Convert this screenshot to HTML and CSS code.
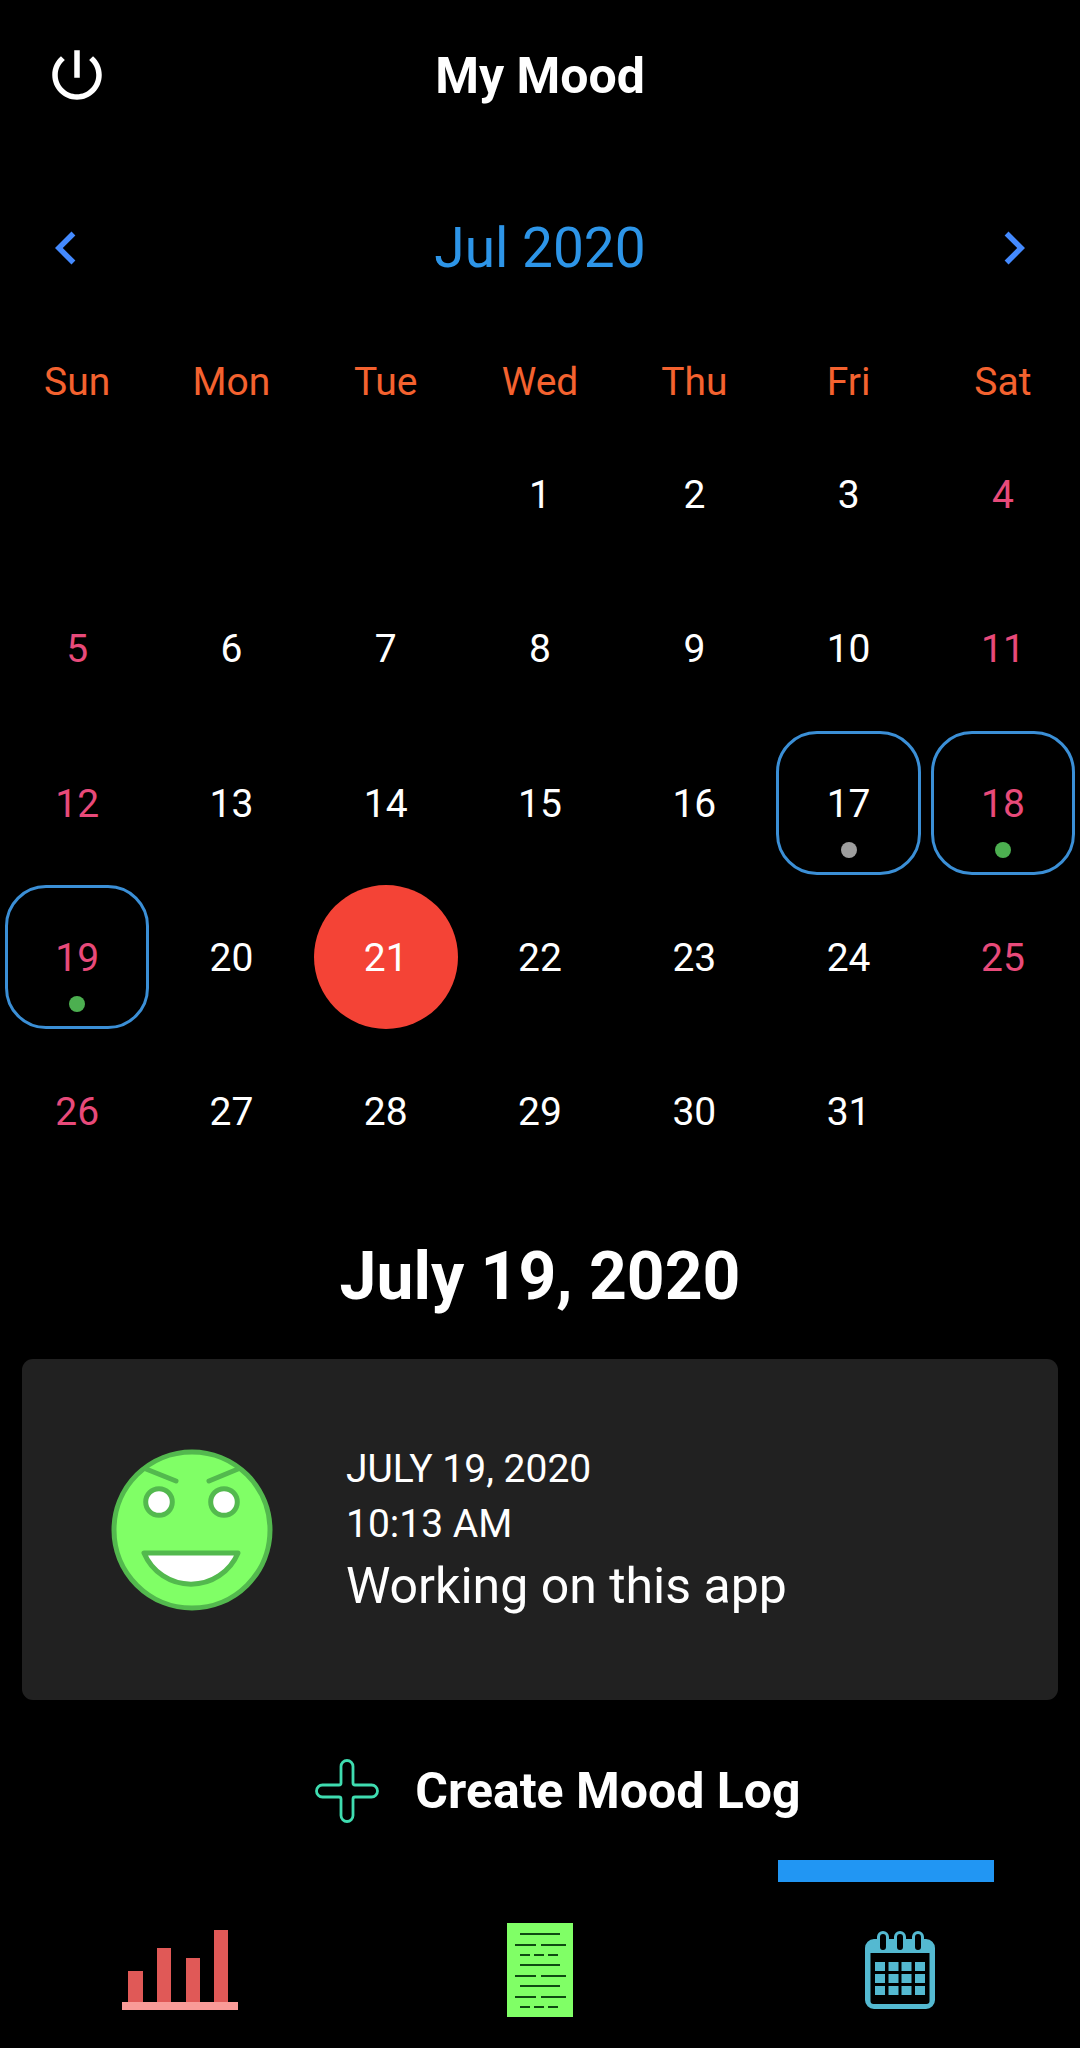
FILE: index.html
```html
<!DOCTYPE html>
<html lang="en">
<head>
    <meta charset="UTF-8">
    <meta name="viewport" content="width=device-width, initial-scale=1.0">
    <title>My Mood</title>
    <link rel="stylesheet" href="styles.css">
</head>
<body>
    <header class="topbar">
        <button class="icon-button" aria-label="Log out">
            <svg class="icon" viewBox="0 0 24 24" fill="currentColor"><path d="M13 3h-2v10h2V3zm4.83 2.17l-1.42 1.42C17.99 7.86 19 9.81 19 12c0 3.87-3.13 7-7 7s-7-3.13-7-7c0-2.19 1.01-4.14 2.58-5.42L6.17 5.17C4.23 6.82 3 9.26 3 12c0 4.97 4.03 9 9 9s9-4.03 9-9c0-2.74-1.23-5.18-3.17-6.83z"/></svg>
        </button>
        <h1 class="title">My Mood</h1>
    </header>

    <main>
        <div class="month">
            <button class="icon-button" aria-label="Previous month">
                <svg class="icon" viewBox="0 0 24 24" fill="currentColor"><path d="M15.41 7.41L14 6l-6 6 6 6 1.41-1.41L10.83 12z"/></svg>
            </button>
            <h2 class="month-name">Jul 2020</h2>
            <button class="icon-button" aria-label="Next month">
                <svg class="icon" viewBox="0 0 24 24" fill="currentColor"><path d="M10 6L8.59 7.41 13.17 12l-4.58 4.59L10 18l6-6z"/></svg>
            </button>
        </div>

        <div class="weekdays">
            <span>Sun</span>
            <span>Mon</span>
            <span>Tue</span>
            <span>Wed</span>
            <span>Thu</span>
            <span>Fri</span>
            <span>Sat</span>
        </div>

        <div class="days">
            <!-- July starts on a Wednesday -->
            <button class="day first">1</button>
            <button class="day">2</button>
            <button class="day">3</button>
            <button class="day weekend">4</button>

            <button class="day weekend">5</button>
            <button class="day">6</button>
            <button class="day">7</button>
            <button class="day">8</button>
            <button class="day">9</button>
            <button class="day">10</button>
            <button class="day weekend">11</button>

            <button class="day weekend">12</button>
            <button class="day">13</button>
            <button class="day">14</button>
            <button class="day">15</button>
            <button class="day">16</button>
            <button class="day logged">17<span class="dot"></span></button>
            <button class="day weekend logged">18<span class="dot good"></span></button>

            <button class="day weekend logged">19<span class="dot good"></span></button>
            <button class="day">20</button>
            <button class="day today">21</button>
            <button class="day">22</button>
            <button class="day">23</button>
            <button class="day">24</button>
            <button class="day weekend">25</button>

            <button class="day weekend">26</button>
            <button class="day">27</button>
            <button class="day">28</button>
            <button class="day">29</button>
            <button class="day">30</button>
            <button class="day">31</button>
        </div>

        <h2 class="selected-date">July 19, 2020</h2>

        <div class="card">
            <svg class="face" viewBox="0 0 162 162" fill="#fff" stroke="#53b94e" stroke-width="5" stroke-linecap="round" stroke-linejoin="round">
                <circle cx="81" cy="81" r="78" fill="#80ff66"/>
                <path d="M35 20l30 12M127 20L98 32"/>
                <circle cx="48" cy="53" r="13.3"/>
                <circle cx="113" cy="53" r="13.3"/>
                <path d="M33 104h94A51 51 0 0 1 33 104z"/>
            </svg>
            <div class="log">
                <p class="log-time">JULY 19, 2020</p>
                <p class="log-time">10:13 AM</p>
                <p class="log-text">Working on this app</p>
            </div>
        </div>

        <div class="create">
            <button class="create-button">
                <svg class="plus" viewBox="0 0 64 64" fill="none" stroke="#3fdcb0" stroke-width="2.8">
                    <path d="M26 7.500a6 6 0 0 1 12 0V24q0 2 2 2H56.500a6 6 0 0 1 0 12H40q-2 0-2 2V56.500a6 6 0 0 1-12 0V40q0-2-2-2H7.500a6 6 0 0 1 0-12H24q2 0 2-2z"/>
                </svg>
                Create Mood Log
            </button>
        </div>
    </main>

    <div class="indicator"></div>
    <nav class="tabs">
        <a class="tab" href="#chart" aria-label="Chart">
            <svg width="116" height="80" viewBox="0 0 116 80" fill="#e05957">
                <path d="M6 41h15v31H6zM35 18h14v54H35zM64 28h14v44H64zM92 0h14v72H92z"/>
                <path d="M0 72h116v8H0z" fill="#f99b98"/>
            </svg>
        </a>
        <a class="tab" href="#list" aria-label="Logs">
            <svg width="66" height="94" viewBox="0 0 66 94">
                <path d="M0 0h66v94H0z" fill="#80ff66"/>
                <path d="M13 11h40M8 22h21M34 22h25M13 32h10M27 32h10M41 32h10M13 42h40M8 53h21M34 53h25M13 63h40M8 74h21M34 74h25M13 84h10M27 84h10M41 84h10" stroke="#0f4a12" stroke-width="2"/>
            </svg>
        </a>
        <a class="tab" href="#calendar" aria-label="Calendar">
            <svg width="70" height="78" viewBox="0 0 70 78" fill="#54b9d1">
                <path d="M12 6a6 6 0 0 1 12 0v2h5V6a6 6 0 0 1 12 0v2h6V6a6 6 0 0 1 12 0v2h2a9 9 0 0 1 9 9v52a9 9 0 0 1-9 9H9a9 9 0 0 1-9-9V17a9 9 0 0 1 9-9h3z"/>
                <path d="M5.500 22h59v48a3 3 0 0 1-3 3h-53a3 3 0 0 1-3-3z" fill="#000"/>
                <path d="M18 6v10M35 6v10M53 6v10" stroke="#000" stroke-width="6" stroke-linecap="round"/>
                <path d="M10 31h10v9H10zM23.500 31h10v9h-10zM36.500 31h10v9h-10zM50 31h10v9H50zM10 43h10v9H10zM23.500 43h10v9h-10zM36.500 43h10v9h-10zM50 43h10v9H50zM10 55h10v9H10zM23.500 55h10v9h-10zM36.500 55h10v9h-10zM50 55h10v9H50z"/>
            </svg>
        </a>
    </nav>
</body>
</html>
```
FILE: styles.css
```css
* {
    box-sizing: border-box;
}
body {
    margin: 0;
    background: #000;
    color: #fff;
    font-family: Roboto, sans-serif;
    font-size: 39px;
}
h1, h2, p {
    margin: 0;
}
button {
    padding: 0;
    border: none;
    background: none;
    color: inherit;
    font: inherit;
    cursor: pointer;
}
svg {
    display: block;
}
.icon {
    width: 66px;
    height: 66px;
}

/* Top bar */
.topbar {
    display: grid;
    grid-template-columns: 66px 1fr 66px;
    align-items: center;
    height: 150px;
    padding: 0 44px;
}
.title {
    padding-top: 2px;
    font-size: 50px;
    font-weight: bold;
    text-align: center;
}

/* Calendar */
.month {
    display: flex;
    justify-content: space-between;
    align-items: center;
    height: 195px;
    padding: 0 33px;
    color: #448aff;
}
.month-name {
    color: #2d95e8;
    font-size: 55px;
    font-weight: normal;
}
.weekdays, .days {
    display: grid;
    grid-template-columns: repeat(7, 1fr);
}
.weekdays {
    padding-top: 2px;
    line-height: 70px;
    color: #f4622f;
    text-align: center;
}
.day {
    position: relative;
    aspect-ratio: 1;
    margin: 5px;
    padding-top: 2px;
}
.first {
    grid-column: 4;
}
.weekend {
    color: #e84a7a;
}
.logged {
    border: 3px solid #3b8fd6;
    border-radius: 41px;
}
.today {
    border-radius: 50%;
    background: #f44336;
}
.dot {
    position: absolute;
    bottom: 14px;
    left: calc(50% - 8px);
    width: 16px;
    height: 16px;
    border-radius: 50%;
    background: #9e9e9e;
}
.dot.good {
    background: #4caf50;
}

/* Selected day */
.selected-date {
    padding-top: 6px;
    font-size: 66px;
    line-height: 165px;
    text-align: center;
}
.card {
    display: flex;
    align-items: center;
    gap: 73px;
    margin: 0 22px;
    padding: 79px 89px;
    border-radius: 11px;
    background: #212121;
}
.face {
    width: 162px;
    height: 162px;
}
.log {
    padding-top: 4px;
}
.log-time {
    line-height: 55px;
}
.log-text {
    font-size: 50px;
    line-height: 69px;
}

/* Create button */
.create {
    display: flex;
    justify-content: center;
    padding: 58px 0 36px 36px;
}
.create-button {
    display: flex;
    align-items: center;
    gap: 36px;
    height: 66px;
    font-size: 50px;
    font-weight: bold;
}
.plus {
    width: 64px;
    height: 64px;
}

/* Bottom tabs */
.indicator {
    width: 20%;
    height: 22px;
    margin-left: 72%;
    background: #2196f3;
}
.tabs {
    display: grid;
    grid-template-columns: repeat(3, 1fr);
    padding: 41px 0 31px;
}
.tab {
    display: flex;
    justify-content: center;
    align-items: center;
}
```
